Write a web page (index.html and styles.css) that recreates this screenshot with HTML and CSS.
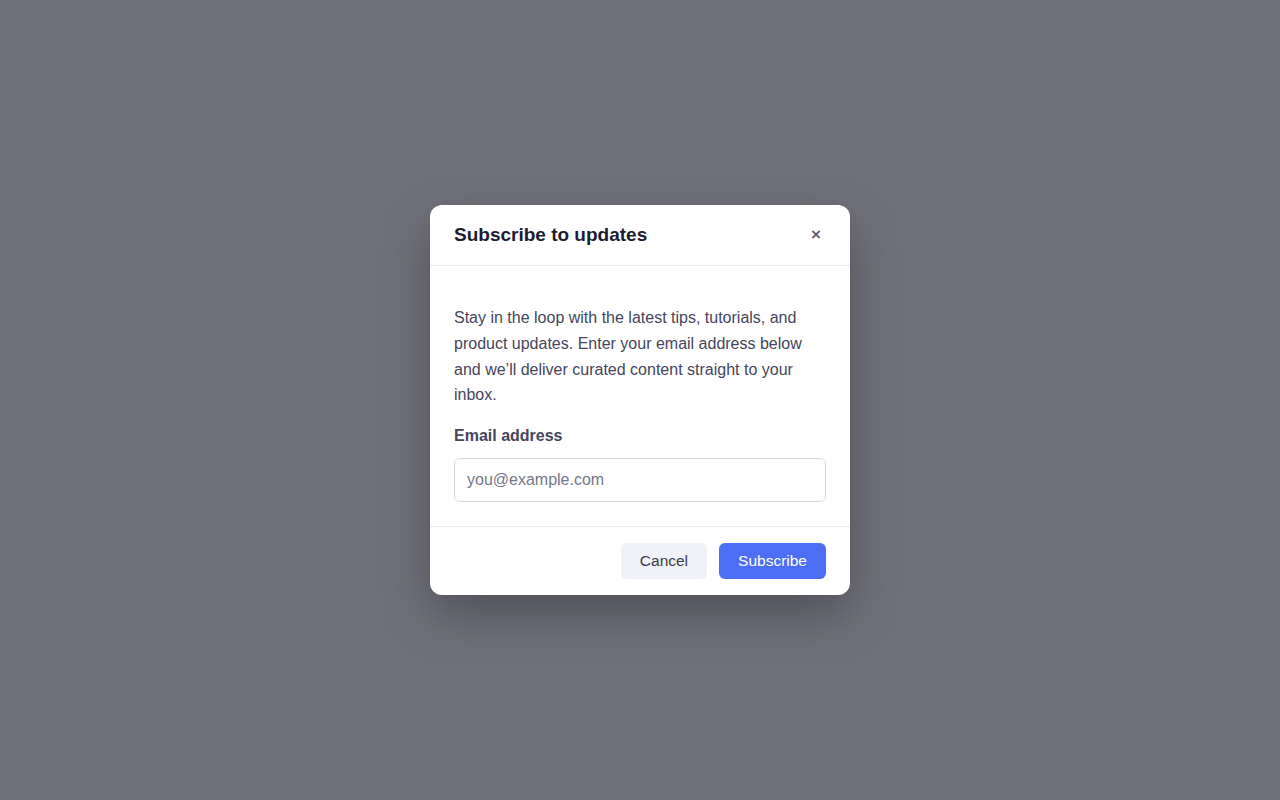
FILE: index.html
```html
<!DOCTYPE html>
<html lang="en">
  <head>
    <meta charset="UTF-8" />
    <meta name="viewport" content="width=device-width, initial-scale=1.0" />
    <title>Subscribe to updates</title>
    <link rel="stylesheet" href="styles.css">
  </head>
  <body>
    <div class="backdrop">
      <div class="modal" role="dialog" aria-labelledby="modalTitle">
        <div class="modal-header">
          <h2 id="modalTitle">Subscribe to updates</h2>
          <button class="close" type="button" aria-label="Close">&times;</button>
        </div>
        <div class="modal-body">
          <p>Stay in the loop with the latest tips, tutorials, and product updates. Enter your email address below and we’ll deliver curated content straight to your inbox.</p>
          <label for="email">Email address</label>
          <input type="email" id="email" name="email" placeholder="you@example.com" />
        </div>
        <div class="modal-footer">
          <button class="btn btn-secondary" type="button">Cancel</button>
          <button class="btn btn-primary" type="button">Subscribe</button>
        </div>
      </div>
    </div>
  </body>
</html>
```

FILE: styles.css
```css
body {
  font-family: "Liberation Sans", Arial, sans-serif;
  margin: 0;
}

.backdrop {
  height: 100vh;
  background-color: #71717b;
  display: flex;
  align-items: center;
  justify-content: center;
}

.modal {
  width: 420px;
  background-color: #fff;
  border-radius: 12px;
  box-shadow: 0 20px 50px rgba(20, 20, 30, 0.35);
  overflow: hidden;
}

.modal-header {
  display: flex;
  align-items: center;
  justify-content: space-between;
  padding: 18px 24px;
  border-bottom: 1px solid #e8e8ef;
}

.modal-header h2 {
  margin: 0;
  font-size: 19px;
  line-height: 24px;
  color: #1c1c33;
}

.close {
  width: 24px;
  height: 24px;
  padding: 0;
  margin-right: -2px;
  border: none;
  background: none;
  color: #5d5f78;
  font-family: "Liberation Sans", Arial, sans-serif;
  font-size: 17px;
  font-weight: bold;
  line-height: 24px;
  cursor: pointer;
}

.modal-body {
  padding: 24px;
  border-bottom: 1px solid #e8e8ef;
}

.modal-body p {
  margin: 15px 0 16px;
  font-size: 16px;
  line-height: 25.6px;
  color: #45465c;
}

label {
  display: block;
  margin-bottom: 10px;
  font-size: 16px;
  line-height: 24px;
  font-weight: bold;
  color: #45465c;
}

input {
  width: 100%;
  height: 44px;
  padding: 0 12px;
  box-sizing: border-box;
  border: 1px solid #d5d7e5;
  border-radius: 6px;
  font-family: "Liberation Sans", Arial, sans-serif;
  font-size: 16px;
  color: #1c1c33;
}

input::placeholder {
  color: #76778a;
}

.modal-footer {
  display: flex;
  justify-content: flex-end;
  gap: 12px;
  padding: 16px 24px;
}

.btn {
  height: 36px;
  padding: 0 19px;
  border: none;
  border-radius: 6px;
  font-family: "Liberation Sans", Arial, sans-serif;
  font-size: 15.5px;
  cursor: pointer;
}

.btn-secondary {
  background-color: #f1f2f7;
  color: #3a3b50;
}

.btn-primary {
  background-color: #4c6ef5;
  color: #fff;
}
```
